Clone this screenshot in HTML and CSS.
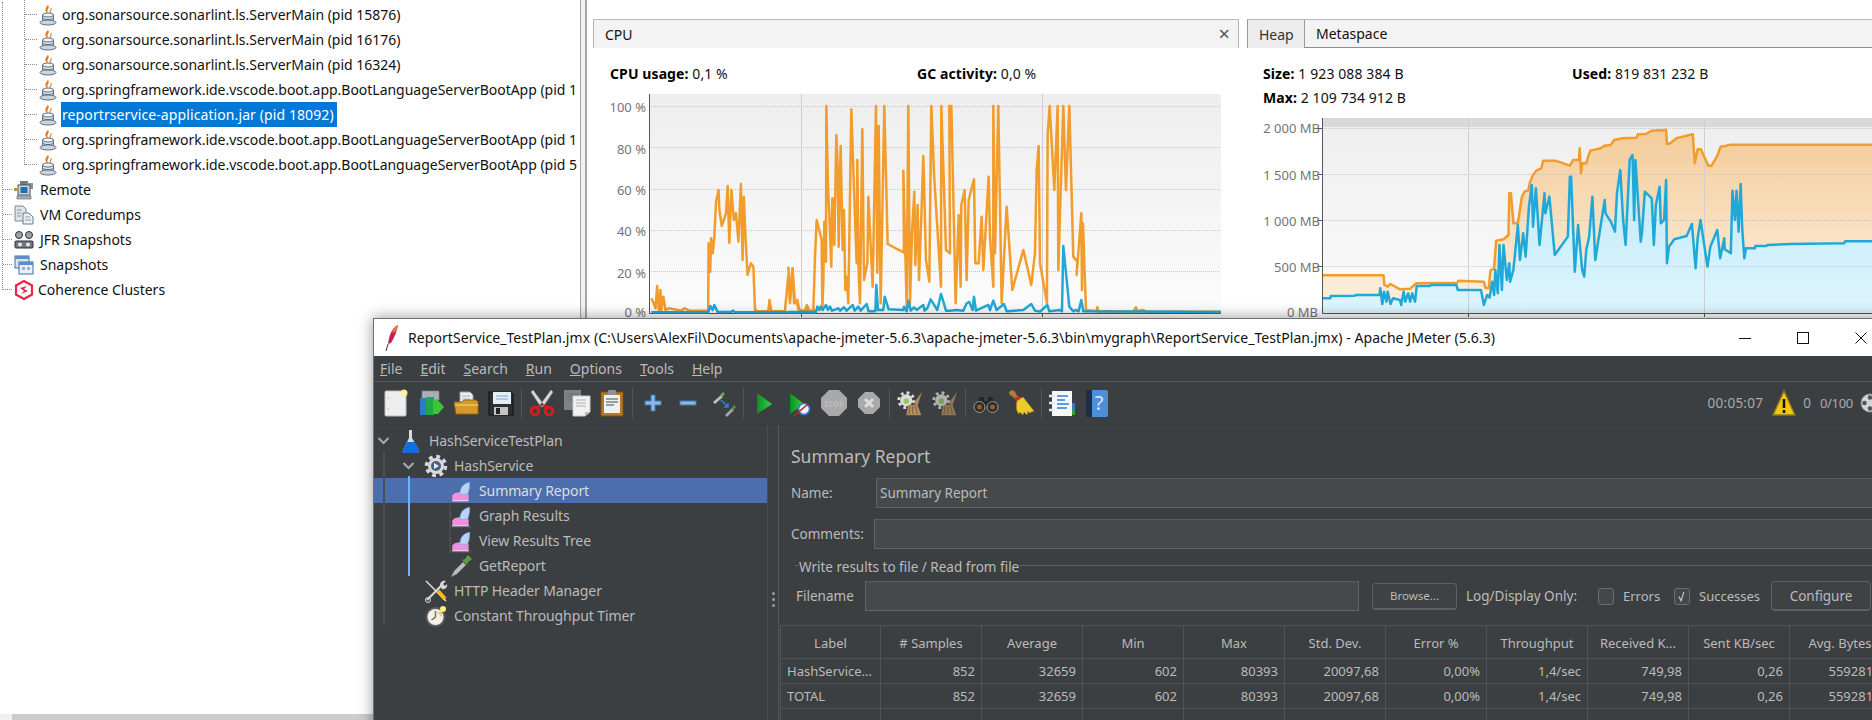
FILE: index.html
```html
<!DOCTYPE html>
<html lang="en">
<head>
<meta charset="utf-8">
<title>VisualVM and Apache JMeter</title>
<link rel="stylesheet" href="styles.css">
</head>
<body>
<svg class="defs" width="0" height="0" aria-hidden="true">
  <defs>
    <linearGradient id="plotBg" x1="0" y1="0" x2="0" y2="1"><stop offset="0" stop-color="#eeeeee"/><stop offset="1" stop-color="#fbfbfb"/></linearGradient>
    <linearGradient id="orangeFill" x1="0" y1="0" x2="0" y2="1"><stop offset="0" stop-color="#f3cc99"/><stop offset="1" stop-color="#fdf1e2"/></linearGradient>
    <linearGradient id="blueFill" x1="0" y1="0" x2="0" y2="1"><stop offset="0" stop-color="#bce9f9"/><stop offset="1" stop-color="#ddf5fe"/></linearGradient>
    <linearGradient id="green" x1="0" y1="0" x2="1" y2="0"><stop offset="0" stop-color="#0d8f1f"/><stop offset="1" stop-color="#35d04a"/></linearGradient>
    <symbol id="java" viewBox="0 0 18 22">
      <path d="M9 1c2.500 3-2 4 0 8-3.500-1-3.500-4.500 0-8z" fill="#e47c1e"/>
      <path d="M12 4c1 2.500-2 3-.5 5.500" fill="none" stroke="#e8923a" stroke-width="1.300"/>
      <path d="M3.500 11v5c0 2.800 11 2.800 11 0v-5z" fill="#dfe4e8" stroke="#5d7184"/>
      <ellipse cx="9" cy="11" rx="5.500" ry="2" fill="#f4f4f4" stroke="#5d7184"/>
      <path d="M4 14.500c2 1.500 8 1.500 10 0" fill="none" stroke="#5d7184"/>
      <ellipse cx="9" cy="18.500" rx="8" ry="2.500" fill="#cdd4da" stroke="#5d7184"/>
    </symbol>
    <symbol id="chart" viewBox="0 0 22 22">
      <path d="M1 1v20h20" fill="none" stroke="#6d7073" stroke-dasharray="1 1"/>
      <path d="M3 20v-5c3-3 5-2 7-3 3 1 6 2 8 2v6z" fill="#f08fe0"/>
      <path d="M10 14c0-6 3-10 9-11 0 5-1 9-2 11-2 0-4 0-7 0z" fill="#b8d3f6" stroke="#7fa6df" stroke-width=".6"/>
      <path d="M3 20h15" stroke="#fff" stroke-width=".8"/>
    </symbol>
    <symbol id="gearbroom" viewBox="0 0 30 30">
      <circle cx="11" cy="12" r="6.500" fill="#dedede"/>
      <circle cx="11" cy="12" r="8" fill="none" stroke="#dedede" stroke-width="3" stroke-dasharray="3 3.300"/>
      <circle cx="11" cy="13" r="3" fill="#9bc45c"/>
      <path d="M28 3 19 15l4 3z" fill="#b08a5c"/>
      <path d="M13 17h10l4 11H11z" fill="#b58d5e"/>
      <path d="M15 18l-1 9M18 18v9M21 18l2 9" stroke="#7d5d39"/>
    </symbol>
  </defs>
</svg>

<div class="visualvm">
  <aside class="nav">
    <div class="root">
      <div class="branch">
        <div class="node"><svg class="java"><use href="#java"/></svg><span>org.sonarsource.sonarlint.ls.ServerMain (pid 15876)</span></div>
        <div class="node"><svg class="java"><use href="#java"/></svg><span>org.sonarsource.sonarlint.ls.ServerMain (pid 16176)</span></div>
        <div class="node"><svg class="java"><use href="#java"/></svg><span>org.sonarsource.sonarlint.ls.ServerMain (pid 16324)</span></div>
        <div class="node"><svg class="java"><use href="#java"/></svg><span>org.springframework.ide.vscode.boot.app.BootLanguageServerBootApp (pid 1</span></div>
        <div class="node"><svg class="java"><use href="#java"/></svg><span class="picked">reportrservice-application.jar (pid 18092)</span></div>
        <div class="node"><svg class="java"><use href="#java"/></svg><span>org.springframework.ide.vscode.boot.app.BootLanguageServerBootApp (pid 1</span></div>
        <div class="node"><svg class="java"><use href="#java"/></svg><span>org.springframework.ide.vscode.boot.app.BootLanguageServerBootApp (pid 5</span></div>
      </div>
      <div class="node top">
        <svg class="ticon" viewBox="0 0 20 20"><rect x="6" y="1" width="8" height="4" fill="#6f7d8a"/><rect x="13" y="3" width="6" height="6" fill="#8795a3"/><rect x="4" y="5" width="12" height="10" fill="#cfd8e0" stroke="#47525c"/><rect x="6.500" y="7" width="7" height="6" fill="#1f6fb5"/><rect x="3" y="16" width="14" height="3" fill="#aab3bb" stroke="#56616b" stroke-width=".6"/><rect x="0" y="8" width="3" height="3" fill="#c98a2c"/></svg>
        <span>Remote</span>
      </div>
      <div class="node top">
        <svg class="ticon" viewBox="0 0 20 20"><path d="M1 1h8l3 3v12H1z" fill="#dfe5ea" stroke="#7c8894"/><path d="M9 8h6l4 4v7H9z" fill="#eef1f4" stroke="#6c7a87"/><path d="M3 5h5M3 8h4M3 11h4M11 12h5M11 15h6" stroke="#8d98a3"/></svg>
        <span>VM Coredumps</span>
      </div>
      <div class="node top">
        <svg class="ticon" viewBox="0 0 20 20"><circle cx="5" cy="5" r="3.500" fill="#9aa2a9" stroke="#333"/><circle cx="15" cy="5" r="3.500" fill="#9aa2a9" stroke="#333"/><rect x="1" y="11" width="18" height="7" rx="1" fill="#70777d" stroke="#2f3337"/><circle cx="6" cy="14.500" r="2" fill="#e7e7e7"/><circle cx="14" cy="14.500" r="2" fill="#e7e7e7"/></svg>
        <span>JFR Snapshots</span>
      </div>
      <div class="node top">
        <svg class="ticon" viewBox="0 0 20 20"><rect x="1" y="1" width="14" height="12" fill="#d8e4f2" stroke="#3c6ea8"/><rect x="1" y="1" width="14" height="3" fill="#5b8ec9"/><rect x="5" y="7" width="14" height="12" fill="#e9f0f8" stroke="#3c6ea8"/><rect x="5" y="7" width="14" height="3" fill="#5b8ec9"/><path d="M8 12h3v3H8zM13 12h3v3h-3z" fill="#9db0c4"/></svg>
        <span>Snapshots</span>
      </div>
      <div class="node top tight">
        <svg class="ticon" viewBox="0 0 20 20"><path d="M10 1l8 4.500v9L10 19l-8-4.500v-9z" fill="#fff" stroke="#e8264c" stroke-width="2.200"/><path d="M6 8l7-2-3 3 4 2-7 3 3-3z" fill="#e8264c"/></svg>
        <span>Coherence Clusters</span>
      </div>
    </div>
    <div class="hscroll"><div class="hscroll-end"></div></div>
  </aside>
  <div class="divider"></div>

  <section class="panel cpu">
    <div class="tabhead cpuhead"><span>CPU</span><span class="x">×</span></div>
    <div class="stats cpustats">
      <div><b>CPU usage:</b> 0,1 %</div>
      <div><b>GC activity:</b> 0,0 %</div>
    </div>
    <svg class="chart cpuchart" viewBox="593 94 647 224" width="647" height="224">
      <rect x="649" y="94" width="572" height="219" fill="url(#plotBg)"/>
      <path class="grid" d="M649 106.500H1221M649 147.500H1221M649 189.500H1221M649 230.500H1221M649 271.500H1221"/>
      <path class="vgrid" d="M801.500 94V313M1042.500 94V313"/>
      <path class="axis" d="M649.500 94V313.500H1221M801.500 313V317M1042.500 313V317"/>
      <g class="ylab">
        <text x="646" y="112">100 %</text><text x="646" y="154">80 %</text><text x="646" y="195">60 %</text><text x="646" y="236">40 %</text><text x="646" y="278">20 %</text><text x="646" y="317">0 %</text>
      </g>
      <g transform="translate(590,0) scale(.4146,.3333)">
        <polyline class="line or" points="148,895 152,905 158,925 162,858 166,930 170,870 172,930 177,890 182,930 190,925 220,932 228,925 240,932 285,932 286,730 290,815 292,715 296,760 300,708 304,605 310,570 312,630 318,678 328,640 332,558 336,728 341,570 347,660 352,640 358,725 364,552 368,780 371,590 375,710 380,825 388,790 394,800 398,930 405,934 430,934 433,900 437,934 470,934 478,830 482,900 488,806 494,900 500,915 505,934 520,934 523,915 530,934 546,934"/>
        <polyline class="line bl" points="148,937 285,937 290,918 296,930 300,915 308,936 340,936 345,932 350,937 546,937"/>
      </g>
      <g transform="translate(790,90) scale(.3333)">
        <polyline class="line or" points="-5,530 0,640 8,535 12,640 22,630 28,660 45,662 50,648 55,662 70,662 75,500 80,390 95,450 97,660 100,575 103,395 108,515 109,48 114,290 118,375 124,530 127,325 131,328 133,465 139,135 143,230 146,470 152,168 158,480 162,360 166,600 170,560 175,640 184,58 192,300 200,520 202,210 206,550 210,640 217,118 222,570 232,520 235,320 248,590 258,48 262,548 266,108 272,640 283,48 293,462 342,488 340,242 350,650 355,48 360,640 366,430 373,305 376,525 383,345 387,570 394,380 400,198 408,510 418,575 424,48 432,250 453,590 454,48 468,480 480,490 478,48 484,48 497,640 506,375 512,590 514,345 524,300 530,570 536,330 552,268 556,520 566,520 575,380 580,540 596,260 600,440 610,590 610,48 615,490 625,48 635,640 650,350 667,600 700,480 724,585 735,490 740,240 746,168 750,520 771,640 773,135 779,48 793,300 803,48 805,540 820,48 828,300 838,48 850,500 862,515 860,555 874,370 876,600 879,400 888,660 920,664 922,652 926,665 950,664 1030,665 1038,652 1042,664 1060,660 1068,665 1293,665"/>
        <polyline class="line bl" points="-5,666 78,666 82,650 88,660 92,650 98,660 108,645 114,660 120,650 126,662 145,655 150,662 162,652 170,662 188,645 194,662 205,650 212,662 230,642 236,664 256,664 259,585 264,660 280,660 284,620 296,658 340,660 342,650 350,664 356,632 362,662 372,652 380,660 400,645 404,662 412,655 422,628 442,660 453,612 468,662 480,662 500,660 520,662 530,640 538,636 548,660 552,620 558,662 595,645 600,660 610,632 620,660 642,642 650,664 700,660 724,642 735,662 750,665 772,645 778,664 810,660 816,664 820,468 838,650 850,664 858,660 866,664 874,630 880,664 1293,666"/>
      </g>
    </svg>
  </section>

  <section class="panel heap">
    <div class="tabhead heaphead"><span class="tab on">Heap</span><span class="tab">Metaspace</span></div>
    <div class="stats heapstats">
      <div><b>Size:</b> 1 923 088 384 B</div>
      <div><b>Used:</b> 819 831 232 B</div>
      <div><b>Max:</b> 2 109 734 912 B</div>
    </div>
    <svg class="chart heapchart" viewBox="1247 118 625 200" width="625" height="200">
      <rect x="1322" y="118" width="550" height="195" fill="url(#plotBg)"/>
      <rect x="1322" y="118" width="550" height="9" fill="#d9d9d9"/>
      <g transform="translate(1230,0) scale(.4095,.3333)">
        <polygon fill="url(#orangeFill)" points="226,938 226,826 375,826 377,855 385,860 392,852 415,868 440,866 455,850 555,848 558,842 620,845 624,864 632,864 636,812 645,805 650,722 668,718 680,705 682,580 686,580 692,670 703,670 713,590 720,574 728,572 733,545 740,525 748,512 760,505 765,482 795,482 830,497 838,480 852,480 854,445 857,520 860,490 870,490 875,468 880,452 905,445 915,437 930,435 938,420 958,415 993,413 996,403 1015,402 1030,392 1065,390 1067,432 1075,430 1090,415 1130,403 1135,490 1142,448 1150,448 1168,497 1176,497 1190,468 1198,440 1210,438 1222,434 1568,434 1568,938"/>
        <polygon fill="url(#blueFill)" points="226,938 226,895 245,895 246,888 305,887 307,885 365,885 367,865 372,912 376,875 382,905 385,875 392,912 398,895 415,900 418,915 424,875 428,905 435,880 440,905 445,880 452,905 456,858 488,858 490,855 553,855 556,870 613,870 620,915 628,885 634,893 640,845 645,885 648,810 654,880 658,735 664,870 668,735 676,840 682,790 684,845 692,810 703,675 708,780 716,700 722,770 730,620 737,555 740,680 747,565 756,735 768,580 770,640 780,590 793,765 825,710 830,530 833,530 842,815 850,675 860,810 865,830 870,750 877,710 885,590 892,780 915,600 917,640 930,665 940,695 945,580 953,510 960,660 966,735 976,480 983,465 987,660 990,480 1003,725 1006,700 1013,575 1030,595 1035,735 1040,615 1049,560 1052,670 1060,660 1065,540 1067,790 1072,740 1085,718 1115,708 1128,672 1137,805 1142,715 1149,660 1155,710 1166,800 1173,740 1190,690 1197,775 1207,715 1208,748 1223,760 1227,572 1233,660 1237,572 1242,695 1247,552 1251,690 1256,775 1260,745 1282,745 1283,738 1310,738 1312,735 1370,732 1500,730 1502,724 1568,724 1568,938"/>
      </g>
      <path class="grid" d="M1322 128.500H1872M1322 174.500H1872M1322 220.500H1872M1322 266.500H1872"/>
      <path class="vgrid" d="M1468.500 118V313M1704.500 118V313"/>
      <g transform="translate(1230,0) scale(.4095,.3333)">
        <polyline class="line or" points="226,826 375,826 377,855 385,860 392,852 415,868 440,866 455,850 555,848 558,842 620,845 624,864 632,864 636,812 645,805 650,722 668,718 680,705 682,580 686,580 692,670 703,670 713,590 720,574 728,572 733,545 740,525 748,512 760,505 765,482 795,482 830,497 838,480 852,480 854,445 857,520 860,490 870,490 875,468 880,452 905,445 915,437 930,435 938,420 958,415 993,413 996,403 1015,402 1030,392 1065,390 1067,432 1075,430 1090,415 1130,403 1135,490 1142,448 1150,448 1168,497 1176,497 1190,468 1198,440 1210,438 1222,434 1568,434"/>
        <polyline class="line bl" points="226,895 245,895 246,888 305,887 307,885 365,885 367,865 372,912 376,875 382,905 385,875 392,912 398,895 415,900 418,915 424,875 428,905 435,880 440,905 445,880 452,905 456,858 488,858 490,855 553,855 556,870 613,870 620,915 628,885 634,893 640,845 645,885 648,810 654,880 658,735 664,870 668,735 676,840 682,790 684,845 692,810 703,675 708,780 716,700 722,770 730,620 737,555 740,680 747,565 756,735 768,580 770,640 780,590 793,765 825,710 830,530 833,530 842,815 850,675 860,810 865,830 870,750 877,710 885,590 892,780 915,600 917,640 930,665 940,695 945,580 953,510 960,660 966,735 976,480 983,465 987,660 990,480 1003,725 1006,700 1013,575 1030,595 1035,735 1040,615 1049,560 1052,670 1060,660 1065,540 1067,790 1072,740 1085,718 1115,708 1128,672 1137,805 1142,715 1149,660 1155,710 1166,800 1173,740 1190,690 1197,775 1207,715 1208,748 1223,760 1227,572 1233,660 1237,572 1242,695 1247,552 1251,690 1256,775 1260,745 1282,745 1283,738 1310,738 1312,735 1370,732 1500,730 1502,724 1568,724"/>
      </g>
      <path class="axis" d="M1322.500 118V313.500H1872M1468.500 313V317M1704.500 313V317M1317 128.500H1322M1317 174.500H1322M1317 220.500H1322M1317 266.500H1322"/>
      <g class="ylab">
        <text x="1320" y="133">2 000 MB</text><text x="1320" y="180">1 500 MB</text><text x="1320" y="226">1 000 MB</text><text x="1320" y="272">500 MB</text><text x="1318" y="317">0 MB</text>
      </g>
    </svg>
  </section>
</div>

<div class="jmeter">
  <header class="titlebar">
    <svg class="feather" viewBox="0 0 16 28"><path d="M14 1C8 4 5 11 4 20l3-1c3-5 6-11 7-18z" fill="#c9224e"/><path d="M14 1c-3 2-5 5-6 8l4-2z" fill="#e8862e"/><path d="M4 20l-2 7" stroke="#333"/></svg>
    <span class="title">ReportService_TestPlan.jmx (C:\Users\AlexFil\Documents\apache-jmeter-5.6.3\apache-jmeter-5.6.3\bin\mygraph\ReportService_TestPlan.jmx) - Apache JMeter (5.6.3)</span>
    <div class="winbtns">
      <span class="winbtn"><svg viewBox="0 0 12 12"><path d="M0 6.500h12" stroke="#111"/></svg></span>
      <span class="winbtn"><svg viewBox="0 0 12 12"><rect x=".5" y=".5" width="11" height="11" fill="none" stroke="#111"/></svg></span>
      <span class="winbtn"><svg viewBox="0 0 12 12"><path d="M.5.500l11 11M11.500.500l-11 11" stroke="#111"/></svg></span>
    </div>
  </header>
  <nav class="menubar">
    <span><u>F</u>ile</span><span><u>E</u>dit</span><span><u>S</u>earch</span><span><u>R</u>un</span><span><u>O</u>ptions</span><span><u>T</u>ools</span><span><u>H</u>elp</span>
  </nav>
  <div class="toolbar">
    <svg class="tb" viewBox="0 0 28 28"><rect x="3" y="2" width="21" height="25" rx="1" fill="#eeeeee" stroke="#bdbdbd"/><path d="M6 9h1M6 20h1" stroke="#999"/><circle cx="22" cy="4" r="3.500" fill="#fff29a" opacity=".95"/></svg>
    <svg class="tb" viewBox="0 0 28 28"><rect x="5" y="2" width="17" height="9" fill="#a9b1b6" stroke="#7c8388" stroke-dasharray="2 1"/><rect x="3" y="9" width="7" height="17" fill="#2b7cc4"/><rect x="9" y="8" width="8" height="18" fill="#1ca94a"/><path d="M16 11h5l6 7-6 7h-5z" fill="#3fc23a"/></svg>
    <svg class="tb" viewBox="0 0 28 28"><path d="M8 3h10l3 3v9H8z" fill="#eceff2" stroke="#9aa1a7"/><path d="M10 7h8M10 10h8" stroke="#a9b0b6"/><path d="M2 13h8l2-2h12l2 2v12H4z" fill="#d49a2b" stroke="#96690f"/><path d="M3 15h23v2H3z" fill="#eab94e"/></svg>
    <svg class="tb" viewBox="0 0 28 28"><path d="M2 3h22l2 2v21H2z" fill="#2d2f31" stroke="#111"/><rect x="6" y="3" width="18" height="12" fill="#e5edf5"/><path d="M9 7h12M9 10h12" stroke="#7ea7d0"/><rect x="7" y="18" width="14" height="8" fill="#c3c3c3"/><rect x="9" y="19" width="4" height="6" fill="#222"/></svg>
    <i class="sep"></i>
    <svg class="tb" viewBox="0 0 28 28"><path d="M5 1l11 15-3 2L3 3zM23 1 12 16l3 2L25 3z" fill="#d6d8da" stroke="#8d9296" stroke-width=".6"/><circle cx="7" cy="22" r="3.800" fill="none" stroke="#d01f1f" stroke-width="3"/><circle cx="21" cy="22" r="3.800" fill="none" stroke="#d01f1f" stroke-width="3"/><path d="M9 19l3-3M19 19l-3-3" stroke="#d01f1f" stroke-width="3"/></svg>
    <svg class="tb" viewBox="0 0 28 28"><rect x="1" y="1" width="17" height="20" fill="#808284"/><path d="M3 5h13M3 8h13M3 11h13" stroke="#6a6c6e"/><path d="M10 7h17v16l-5 4H10z" fill="#f2f2f2" stroke="#c9c9c9"/><path d="M13 11h10M13 14h10M13 17h10" stroke="#a8acb0"/><path d="M22 27v-4h5z" fill="#bbb"/></svg>
    <svg class="tb" viewBox="0 0 28 28"><rect x="3" y="3" width="22" height="24" fill="#b67a26" stroke="#7c5112"/><rect x="6" y="6" width="16" height="18" fill="#f0f0f0"/><rect x="10" y="1" width="8" height="5" rx="1" fill="#8f9396"/><path d="M8 10h12M8 13h12M8 16h8" stroke="#7e8286" stroke-width="1.300"/></svg>
    <i class="sep"></i>
    <svg class="tb" viewBox="0 0 28 28"><path d="M12 6h4v6h6v4h-6v6h-4v-6H6v-4h6z" fill="#8db8e6" stroke="#3f76bd"/></svg>
    <svg class="tb" viewBox="0 0 28 28"><rect x="6" y="12" width="16" height="4" fill="#8db8e6" stroke="#3f76bd"/></svg>
    <svg class="tb" viewBox="0 0 28 28"><path d="M4 13l8-7 2 2-8 7z" fill="#b9bfc3"/><path d="M11 6l3-3 2 2-3 3z" fill="#6da544"/><path d="M12 11l7 7M19 14v4h-4" fill="none" stroke="#2a7fe0" stroke-width="1.500"/><path d="M16 26l7-7 2 2-7 7z" fill="#9ea4a8"/><path d="M22 20l3-4 2 2-3 3z" fill="#5d8f3b"/></svg>
    <i class="sep"></i>
    <svg class="tb" viewBox="0 0 28 28"><path d="M7 4l15 11L7 25z" fill="url(#green)"/></svg>
    <svg class="tb" viewBox="0 0 28 28"><path d="M5 4l14 11L5 25z" fill="url(#green)"/><circle cx="19" cy="20" r="5.500" fill="#e9f1fb" stroke="#3c78c4" stroke-width="1.600"/><path d="M9 27l14-12" stroke="#c52222" stroke-width="1.600"/></svg>
    <svg class="tb" viewBox="0 0 28 28"><path class="octa" d="M9 1h10l8 8v10l-8 8H9l-8-8V9z"/><text x="14" y="17.500" class="stoptext">STOP</text></svg>
    <svg class="tb" viewBox="0 0 28 28"><path class="octa" d="M10 3h8l7 7v8l-7 7h-8l-7-7v-8z"/><path d="M10 10l8 8M18 10l-8 8" stroke="#dcdcdc" stroke-width="3"/></svg>
    <i class="sep"></i>
    <svg class="tb"><use href="#gearbroom"/></svg>
    <svg class="tb dim"><use href="#gearbroom"/></svg>
    <i class="sep"></i>
    <svg class="tb" viewBox="0 0 28 28"><path d="M8 8h4v4h4V8h4l6 10H2z" fill="#232527"/><circle cx="7.500" cy="18" r="5.500" fill="#2a2c2e" stroke="#9b9b9b"/><circle cx="20.500" cy="18" r="5.500" fill="#2a2c2e" stroke="#9b9b9b"/><circle cx="7.500" cy="18" r="2.500" fill="#9c5a22"/><circle cx="20.500" cy="18" r="2.500" fill="#9c5a22"/></svg>
    <svg class="tb" viewBox="0 0 28 28"><path d="M3 2c3-2 6 1 6 3l3 4-3 2-4-4C3 6 1 5 3 2z" fill="#b07e2b"/><path d="M7 9l5-2 3 3-5 3z" fill="#cf2a2a"/><path d="M10 12l6-4 11 14-5 2-1-2-1 4-3-3-1 3-3-3-1 2C9 22 9 17 10 12z" fill="#eccb2a" stroke="#a98a11" stroke-width=".6"/></svg>
    <i class="sep"></i>
    <svg class="tb" viewBox="0 0 28 28"><rect x="4" y="2" width="20" height="25" fill="#f7f7f7"/><path d="M9 7h11M9 11h8M9 15h12M9 19h10" stroke="#2a7fe0" stroke-width="1.400"/><path d="M1 7h6M1 14h6M1 21h6" stroke="#e8e8e8" stroke-width="2.500"/><rect x="24" y="14" width="3" height="6" fill="#3c78c4"/><rect x="24" y="20" width="3" height="6" fill="#2ea041"/></svg>
    <svg class="tb" viewBox="0 0 28 28"><rect x="4" y="1" width="21" height="27" rx="2" fill="#4d8fd9"/><rect x="3" y="1" width="6" height="27" fill="#1e2f45"/><text x="16" y="21" class="helptext">?</text></svg>
    <div class="status">
      <span class="time">00:05:07</span>
      <svg class="warn" viewBox="0 0 26 28"><path d="M13 2l11 24H2z" fill="#f3c813" stroke="#8a7a1c" stroke-width="1.500"/><path d="M13 10v9M13 21v3" stroke="#111" stroke-width="2.500"/></svg>
      <span>0</span>
      <span class="threads">0/100</span>
      <svg class="wheel" viewBox="0 0 24 24"><circle cx="12" cy="12" r="10" fill="#d5d5d5" stroke="#707070"/><circle cx="12" cy="6" r="2.500" fill="#555"/><circle cx="6" cy="12" r="2.500" fill="#555"/><circle cx="12" cy="18" r="2.500" fill="#555"/><circle cx="18" cy="12" r="2.500" fill="#555"/></svg>
    </div>
  </div>
  <div class="workspace">
    <div class="testtree">
      <i class="guide guide-a"></i><i class="guide guide-b"></i>
      <div class="titem d0"><svg class="chev" viewBox="0 0 12 8"><path d="M1 1l5 5 5-5" /></svg>
        <svg class="ticon2" viewBox="0 0 24 24"><path d="M10 1h3v8l7 12c1 2-1 3-2 3H6c-2 0-3-1-2-3l6-12z" fill="#d7dbde"/><path d="M8 13h8l4 8c1 2-1 3-2 3H6c-2 0-3-1-2-3z" fill="#0f6de0"/></svg>
        <span>HashServiceTestPlan</span></div>
      <div class="titem d1"><svg class="chev" viewBox="0 0 12 8"><path d="M1 1l5 5 5-5"/></svg>
        <svg class="ticon2" viewBox="0 0 24 24"><circle cx="12" cy="12" r="8" fill="#d8dadc"/><circle cx="12" cy="12" r="9.500" fill="none" stroke="#d8dadc" stroke-width="3.500" stroke-dasharray="3.800 3.650"/><circle cx="12" cy="12" r="5" fill="#46627f"/><path d="M10 9l5 3-5 3z" fill="#e9eef4"/></svg>
        <span>HashService</span></div>
      <div class="titem d2 sel"><span class="nochev"></span><svg class="ticon2"><use href="#chart"/></svg><span>Summary Report</span></div>
      <div class="titem d2"><span class="nochev"></span><svg class="ticon2"><use href="#chart"/></svg><span>Graph Results</span></div>
      <div class="titem d2"><span class="nochev"></span><svg class="ticon2"><use href="#chart"/></svg><span>View Results Tree</span></div>
      <div class="titem d2"><span class="nochev"></span>
        <svg class="ticon2" viewBox="0 0 24 24"><path d="M2 23l3-6 9-9 3 3-9 9z" fill="#b8bcc0" stroke="#666" stroke-width=".6"/><path d="M13 6l3-1 3-4 4 4-4 3-1 3z" fill="#5b9d3f"/></svg>
        <span>GetReport</span></div>
      <div class="titem d1"><span class="nochev"></span>
        <svg class="ticon2" viewBox="0 0 24 24"><path d="M2 2l20 20" stroke="#e4e4e4" stroke-width="1.500"/><path d="M14 12l7 8" stroke="#efbd16" stroke-width="4"/><path d="M3 21L18 6" stroke="#d8d8d8" stroke-width="2.200"/><path d="M16 6c0-3 3-5 6-4l-3 3 2 2 2-2c1 3-2 6-5 5z" fill="#d8d8d8"/><circle cx="4" cy="21" r="2.500" fill="none" stroke="#d8d8d8"/></svg>
        <span>HTTP Header Manager</span></div>
      <div class="titem d1"><span class="nochev"></span>
        <svg class="ticon2" viewBox="0 0 24 24"><circle cx="11.500" cy="13" r="10" fill="#5d5a6a"/><circle cx="11.500" cy="13" r="8" fill="#f4f0e3"/><path d="M11.500 7v6l-4 3" stroke="#75725f" stroke-width="1.500" fill="none"/><path d="M13 8h5v5z" fill="#e3c977"/><circle cx="19" cy="5" r="3" fill="#f6f374"/></svg>
        <span>Constant Throughput Timer</span></div>
    </div>
    <div class="splitter"><i></i><i></i><i></i></div>
    <div class="editor">
      <div class="form">
        <h1 class="heading">Summary Report</h1>
        <div class="frow name"><label>Name:</label><div class="field">Summary Report</div></div>
        <div class="frow comments"><label>Comments:</label><div class="field"></div></div>
        <div class="legend"><span>Write results to file / Read from file</span></div>
        <div class="filerow">
          <label class="fnlabel">Filename</label>
          <div class="field fname"></div>
          <span class="btn browse">Browse...</span>
          <span class="logonly">Log/Display Only:</span>
          <span class="check"></span><span class="chktext errs">Errors</span>
          <span class="check"><svg viewBox="0 0 16 16"><path d="M4.500 8l2.500 5 3-10" fill="none" stroke="#c4c4c4" stroke-width="1.400"/></svg></span><span class="chktext succ">Successes</span>
          <span class="btn configure">Configure</span>
        </div>
      </div>
      <table class="summary">
        <thead>
          <tr><th>Label</th><th># Samples</th><th>Average</th><th>Min</th><th>Max</th><th>Std. Dev.</th><th>Error %</th><th>Throughput</th><th>Received K...</th><th>Sent KB/sec</th><th>Avg. Bytes</th></tr>
        </thead>
        <tbody>
          <tr><td>HashService...</td><td>852</td><td>32659</td><td>602</td><td>80393</td><td>20097,68</td><td>0,00%</td><td>1,4/sec</td><td>749,98</td><td>0,26</td><td>559281,0</td></tr>
          <tr><td>TOTAL</td><td>852</td><td>32659</td><td>602</td><td>80393</td><td>20097,68</td><td>0,00%</td><td>1,4/sec</td><td>749,98</td><td>0,26</td><td>559281,0</td></tr>
          <tr><td></td><td></td><td></td><td></td><td></td><td></td><td></td><td></td><td></td><td></td><td></td></tr>
        </tbody>
      </table>
    </div>
  </div>
</div>
</body>
</html>
```

FILE: styles.css
```css
* { box-sizing: border-box; }
html, body { margin: 0; padding: 0; }
body {
  position: relative;
  width: 1872px;
  height: 720px;
  overflow: hidden;
  background: #fff;
  color: #111;
  font-family: "Noto Sans", "Liberation Sans", sans-serif;
  font-size: 13.5px;
}
.defs { position: absolute; }

/* VisualVM, back window */
.visualvm { display: flex; height: 720px; }
.nav {
  width: 580px;
  flex: none;
  display: flex;
  flex-direction: column;
  overflow: hidden;
  padding-top: 2px;
  font-size: 14px;
  letter-spacing: -.02px;
  white-space: nowrap;
}
.root { position: relative; margin-left: 2px; }
.root::before, .branch::before {
  content: "";
  position: absolute;
  left: 0;
  top: 0;
  bottom: 12px;
  border-left: 1px dotted #8a8a8a;
}
.branch { position: relative; margin-left: 22px; }
.branch::before { top: -2px; }
.node { position: relative; display: flex; align-items: center; height: 25px; padding-left: 15px; gap: 5px; }
.node::before {
  content: "";
  position: absolute;
  left: 1px;
  top: 12px;
  width: 12px;
  border-top: 1px dotted #8a8a8a;
}
.java { width: 18px; height: 22px; flex: none; }
.node.top { padding-left: 12px; gap: 6px; }
.node.top::before { width: 9px; }
.node.tight { gap: 4px; }
.ticon { width: 20px; height: 20px; flex: none; }
.picked { background: #0078d7; color: #fff; line-height: 25px; height: 25px; padding: 0 3px 0 1px; margin-left: -1px; letter-spacing: .1px; }
.hscroll { margin-top: auto; height: 6px; background: #cdcdcd; flex: none; }
.hscroll-end { width: 12px; height: 6px; background: #f0f0f0; }
.divider { width: 7px; flex: none; background: #f0f0f0; border-left: 1px solid #a5a5a5; border-right: 2px solid #a5a5a5; }

.panel { flex: none; padding-top: 19px; }
.cpu { width: 653px; padding-left: 6px; }
.heap { width: 625px; margin-left: 7px; }
.tabhead { height: 29px; display: flex; align-items: center; background: #f3f3f3; border-top: 1px solid #b7b7b7; font-size: 14px; }
.cpuhead { width: 646px; border-left: 1px solid #b7b7b7; border-right: 1px solid #b7b7b7; padding: 0 8px 0 11px; justify-content: space-between; }
.x { font-size: 20px; color: #555; line-height: 1; }
.heaphead { border-bottom: 1px solid #8f8f8f; align-items: stretch; }
.tab { display: flex; align-items: center; }
.tab:last-child { padding-left: 11px; }
.tab.on { width: 58px; padding-left: 11px; background: #ececec; border-left: 1px solid #9a9a9a; border-right: 1px solid #9a9a9a; margin-bottom: -1px; color: #333; }
.stats { display: grid; align-content: start; font-size: 14px; letter-spacing: .1px; line-height: 24px; }
.stats b { font-weight: 700; color: #000; }
.cpustats { grid-template-columns: 307px auto; padding: 14px 0 8px 17px; height: 46px; }
.heapstats { grid-template-columns: 309px auto; padding: 14px 0 0 16px; height: 70px; }
.chart { display: block; }
.grid { fill: none; stroke: #c6c6c6; stroke-dasharray: 1 1; }
.vgrid { fill: none; stroke: #cfcfcf; }
.axis { fill: none; stroke: #555; }
.ylab text { font-size: 13px; fill: #747474; text-anchor: end; }
.line { fill: none; stroke-width: 2.500; vector-effect: non-scaling-stroke; stroke-linejoin: round; }
.or { stroke: #f29c2c; }
.bl { stroke: #20a9d8; }

/* JMeter, front window */
.jmeter {
  position: absolute;
  left: 373px;
  top: 318px;
  width: 1518px;
  height: 420px;
  background: #3c3f41;
  border: 1px solid #6f7173;
  box-shadow: 0 0 14px rgba(0,0,0,.42);
  color: #bbbbbb;
}
.titlebar { height: 37px; background: #fff; color: #111; display: flex; align-items: center; font-size: 14px; letter-spacing: .07px; white-space: nowrap; }
.feather { width: 16px; height: 28px; margin-left: 10px; flex: none; }
.title { margin-left: 8px; }
.winbtns { margin-left: auto; display: flex; flex: none; }
.winbtn { width: 58px; height: 37px; display: flex; align-items: center; justify-content: center; }
.winbtn svg { width: 12px; height: 12px; }
.menubar { height: 26px; display: flex; align-items: center; gap: 18px; padding-left: 6px; border-bottom: 1px solid #55585a; font-size: 14px; }
.toolbar { height: 43px; display: flex; align-items: center; padding-left: 4px; background: #3c3f41; border-bottom: 1px solid #383b3d; }
.tb { width: 28px; height: 28px; flex: none; margin: 0 3.500px; }
.tb.dim { opacity: .72; }
.sep { width: 1px; height: 30px; margin: 0 2px 0 3px; background: #555; flex: none; }
.octa { fill: #a9a9a9; }
.stoptext { font-size: 8px; font-weight: 700; fill: #bdbdbd; text-anchor: middle; }
.helptext { font-size: 20px; fill: #dfe9f5; text-anchor: middle; }
.status { margin-left: auto; display: flex; align-items: center; gap: 6px; padding-right: 9px; font-size: 13.5px; color: #aaa; }
.time { margin-right: 2px; letter-spacing: .25px; }
.threads { margin-left: 3px; font-size: 13px; letter-spacing: -.3px; }
.warn { width: 26px; height: 28px; }
.wheel { width: 22px; height: 22px; }

.workspace { display: flex; height: 300px; }
.testtree { position: relative; width: 393px; flex: none; padding-top: 3px; font-size: 14px; letter-spacing: -.1px; white-space: nowrap; }
.guide { position: absolute; width: 2px; }
.guide-a { left: 9px; top: 26px; height: 175px; background: #4b4f51; }
.guide-b { left: 34px; top: 51px; height: 100px; background: #6ab5fb; z-index: 1; }
.titem { display: flex; align-items: center; height: 25px; gap: 5px; }
.d1 { padding-left: 25px; }
.d2 { padding-left: 50px; }
.sel { background: #4b6eaf; color: #dddddd; }
.chev { width: 19px; height: 8px; flex: none; fill: none; stroke: #a9acae; stroke-width: 2; }
.nochev { width: 19px; flex: none; }
.ticon2 { width: 26px; height: 24px; flex: none; }
.splitter { width: 11px; flex: none; display: flex; flex-direction: column; align-items: center; gap: 3px; padding-top: 167px; border-left: 1px solid #4a4d4f; }
.splitter i { width: 3px; height: 3px; border-radius: 50%; background: #9a9c9e; }
.editor { flex: none; width: 1120px; border-left: 1px solid #55585a; }
.form { padding-left: 12px; }
.heading { margin: 0; padding-top: 20px; font-size: 17.5px; line-height: 22px; font-weight: 400; color: #bbb; }
.frow { display: flex; align-items: center; margin-top: 11px; height: 30px; }
.frow label { flex: none; }
.name label { width: 85px; }
.comments label { width: 83px; }
.field { flex: 1; height: 30px; background: #45494a; border: 1px solid #646464; border-top-color: #5a5c5e; padding-left: 3px; display: flex; align-items: center; }
.legend { display: flex; align-items: center; height: 18px; margin: 9px 0 0 4px; }
.legend::before { content: ""; width: 4px; border-top: 1px solid #5e6163; margin-top: -4px; flex: none; }
.legend::after { content: ""; flex: 1; border-top: 1px solid #5e6163; margin-top: -4px; }
.filerow { display: flex; align-items: center; height: 30px; margin-top: 5px; padding-left: 5px; width: 1082px; }
.fnlabel { width: 69px; flex: none; }
.field.fname { flex: none; width: 494px; }
.btn { display: flex; align-items: center; justify-content: center; flex: none; background: #3f4244; border: 1px solid #5e6163; border-bottom-width: 2px; border-radius: 4px; }
.browse { width: 85px; height: 27px; margin-left: 13px; font-size: 11.5px; }
.logonly { margin-left: 9px; width: 118px; flex: none; white-space: nowrap; }
.check { width: 16px; height: 17px; margin-left: 14px; border: 1px solid #6b6e70; border-radius: 3px; background: #43484a; flex: none; display: flex; }
.chktext { margin-left: 9px; flex: none; font-size: 13px; }
.errs { width: 38px; }
.check + .errs + .check { margin-left: 13px; }
.succ { width: 64px; }
.configure { width: 100px; height: 30px; margin-left: 8px; }
.summary { margin: 14px 0 0 1px; border-collapse: collapse; table-layout: fixed; width: 1110px; font-size: 13px; color: #bbb; }
.summary th, .summary td { border: 1px solid #515456; width: 101px; overflow: hidden; white-space: nowrap; font-weight: 400; padding: 0 6px; }
.summary th:first-child, .summary td:first-child { width: 100px; }
.summary th { height: 33px; text-align: center; padding: 2px 2px 0; }
.summary td { height: 25px; text-align: right; }
.summary td:first-child { text-align: left; }
```
